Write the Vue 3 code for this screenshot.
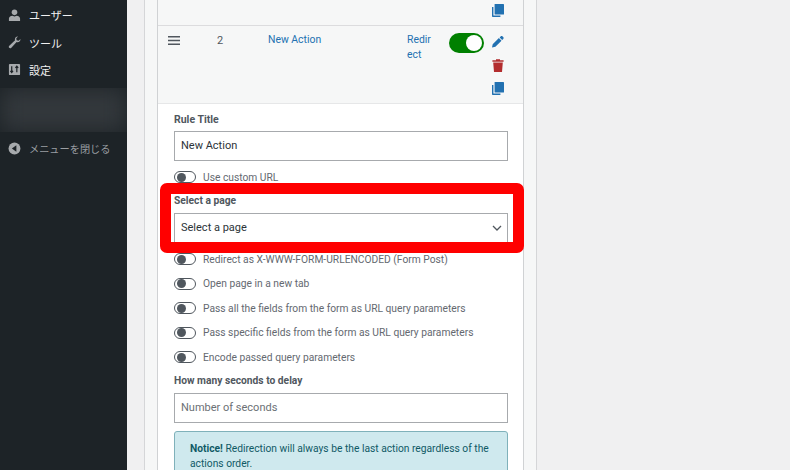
<script setup>
const menu = [
  { label: 'ユーザー', icon: 'user' },
  { label: 'ツール', icon: 'tool' },
  { label: '設定', icon: 'set' }
]
const afterSelect = [
  'Redirect as X-WWW-FORM-URLENCODED (Form Post)',
  'Open page in a new tab',
  'Pass all the fields from the form as URL query parameters',
  'Pass specific fields from the form as URL query parameters',
  'Encode passed query parameters'
]
</script>

<template>
  <div class="page">
    <aside class="side">
      <ul class="menu">
        <li v-for="m in menu" :key="m.label" class="menu-item">
          <svg class="mi" viewBox="0 0 14 14">
            <template v-if="m.icon === 'user'">
              <circle cx="7" cy="3.6" r="3" fill="#a7aaad" />
              <path d="M1 13V10.2C1 8.4 3 7.4 4.6 7.2L7 8.2L9.4 7.2C11 7.4 13 8.4 13 10.2V13Z" fill="#a7aaad" />
            </template>
            <path v-else-if="m.icon === 'tool'" d="M13.4 3.2C13.6 5 12.2 6.6 10.4 6.6C10 6.6 9.6 6.5 9.3 6.4L3.6 12.6C3 13.3 1.9 13.3 1.3 12.7C.7 12.1.7 11 1.4 10.4L7.6 4.7C7.4 4.4 7.4 4 7.4 3.6C7.4 1.8 9 .4 10.8.6L8.9 2.5L9.3 4.7L11.5 5.1Z" fill="#a7aaad" />
            <template v-else>
              <rect x="1" y="1" width="12" height="12" rx="1" fill="#a7aaad" />
              <path d="M4 3.5V10M2.6 8.4L4 10.2L5.4 8.4M9.5 3.5V10M8 5.2L9.5 3.5L11 5.2" fill="none" stroke="#1d2327" stroke-width="1.3" />
            </template>
          </svg>
          <span>{{ m.label }}</span>
        </li>
      </ul>
      <div class="blur-wrap"><div class="blurred"></div></div>
      <div class="collapse">
        <svg class="mi" viewBox="0 0 14 14">
          <circle cx="7" cy="7" r="6.4" fill="#a7aaad" />
          <path d="M9 3.6V10.4L4.2 7Z" fill="#1d2327" />
        </svg>
        <span>メニューを閉じる</span>
      </div>
    </aside>

    <main class="main">
      <section class="panel">
        <div class="card">
          <div class="row row-prev">
            <div class="acts">
              <svg class="act" viewBox="0 0 12 13">
                <path d="M0 3H1.4V11.6H8.4V13H1C.4 13 0 12.6 0 12Z" fill="#2271b1" />
                <rect x="2.6" y="0" width="9.4" height="10.6" rx=".6" fill="#2271b1" />
              </svg>
            </div>
          </div>
          <div class="row row-main">
            <svg class="drag" viewBox="0 0 12 9">
              <path d="M0 .8H12M0 4.5H12M0 8.2H12" stroke="#50575e" stroke-width="1.4" />
            </svg>
            <span class="num">2</span>
            <a class="title">New Action</a>
            <a class="type">Redir<br />ect</a>
            <span class="switch"><i></i></span>
            <div class="acts acts-col">
              <svg class="act" viewBox="0 0 12 12">
                <path d="M8.6.9C9.2.3 10 .3 10.6.9L11.2 1.5C11.8 2.1 11.8 2.9 11.2 3.5L10.2 4.5L7.6 1.9ZM6.9 2.6L9.5 5.2L3.4 11.3L0 12L.7 8.7Z" fill="#2271b1" />
              </svg>
              <svg class="act" viewBox="0 0 12 13">
                <path d="M4 1.2V.3H8V1.2H11.6V2.8H.4V1.2ZM1.2 3.6H10.8L10 13H2Z" fill="#b32d2e" />
              </svg>
              <svg class="act" viewBox="0 0 12 13">
                <path d="M0 3H1.4V11.6H8.4V13H1C.4 13 0 12.6 0 12Z" fill="#2271b1" />
                <rect x="2.6" y="0" width="9.4" height="10.6" rx=".6" fill="#2271b1" />
              </svg>
            </div>
          </div>

          <form class="form">
            <label class="lbl lbl-first">Rule Title</label>
            <div class="field">New Action</div>

            <div class="tog tog-custom"><span class="off"><i></i></span><span>Use custom URL</span></div>

            <label class="lbl lbl-select">Select a page</label>
            <div class="field field-select">
              <span>Select a page</span>
              <svg class="chev" viewBox="0 0 10 6"><path d="M1 1L5 5L9 1" fill="none" stroke="#50575e" stroke-width="1.3" /></svg>
            </div>

            <div class="togs">
              <div v-for="t in afterSelect" :key="t" class="tog"><span class="off"><i></i></span><span>{{ t }}</span></div>
            </div>

            <label class="lbl lbl-delay">How many seconds to delay</label>
            <div class="field placeholder">Number of seconds</div>

            <div class="notice"><b>Notice!</b> Redirection will always be the last action regardless of the actions order.</div>
          </form>
        </div>
      </section>
    </main>

    <div class="highlight"></div>
  </div>
</template>

<style>
html, body { margin: 0; overflow: hidden; }
</style>

<style scoped>
.page {
  position: relative;
  display: flex;
  width: 790px;
  height: 470px;
  overflow: hidden;
  background: #f0f0f1;
  font-family: Roboto, "Noto Sans CJK JP", sans-serif;
  font-size: 11px;
  color: #50575e;
}
.side {
  flex: none;
  width: 127px;
  background: #1d2327;
  color: #f0f0f1;
}
.menu {
  list-style: none;
  margin: 0;
  padding: 0;
}
.menu-item {
  display: flex;
  align-items: center;
  gap: 8px;
  height: 27.4px;
  padding-left: 8px;
  font-size: 11px;
  font-family: "Noto Sans CJK JP", sans-serif;
}
.menu-item:first-child { margin-top: 1.5px; }
.mi { flex: none; width: 13px; height: 13px; }
.blur-wrap {
  height: 44px;
  margin-top: 4px;
  overflow: hidden;
}
.blurred {
  height: 100%;
  background: #33383c;
  filter: blur(11px);
}
.collapse {
  display: flex;
  align-items: center;
  gap: 8px;
  height: 20px;
  margin-top: 7px;
  padding-left: 8px;
  color: #9a9ea2;
  font-size: 10.2px;
  font-family: "Noto Sans CJK JP", sans-serif;
}
.main {
  flex: none;
  width: 410px;
  padding-left: 17px;
}
.panel {
  width: 393px;
  height: 470px;
  box-sizing: border-box;
  border: 1px solid #d5d6d8;
  border-width: 0 1px;
  background: #f6f7f7;
  padding-left: 12px;
}
.card {
  width: 367px;
  height: 470px;
  box-sizing: border-box;
  background: #fff;
  border: 1px solid #d0d2d4;
  border-width: 0 1px;
}
.row {
  display: flex;
  background: #f6f7f7;
  box-sizing: border-box;
}
.row-prev {
  height: 26px;
  justify-content: flex-end;
  border-bottom: 1px solid #dcdcde;
  padding-top: 4px;
}
.row-main {
  position: relative;
  height: 78px;
  border-bottom: 1px solid #e6e7e8;
  padding-top: 6px;
  font-size: 10.4px;
  line-height: 15px;
}
.acts { width: 32px; flex: none; }
.act { display: block; width: 12px; height: 13px; }
.row-prev .acts { width: 31.5px; }
.drag { flex: none; width: 12px; height: 9px; margin: 4px 0 0 10px; }
.num { flex: none; width: 15px; margin: 0 0 0 37px; padding-top: 1px; color: #50575e; font-size: 11px; }
.title { flex: none; width: 139px; margin-left: 36px; color: #2271b1; }
.type { flex: none; width: 42px; color: #2271b1; }
.switch {
  flex: none;
  display: flex;
  align-items: center;
  justify-content: flex-end;
  width: 35px;
  height: 20px;
  margin-top: 1px;
  padding-right: 2px;
  box-sizing: border-box;
  border-radius: 10px;
  background: #008000;
}
.switch i {
  width: 16px;
  height: 16px;
  border-radius: 50%;
  background: #fff;
}
.acts-col {
  display: flex;
  flex-direction: column;
  gap: 10.5px;
  margin-left: 8px;
  width: 14px;
  padding-top: 3px;
}
.form {
  padding: 0 15px 0 16px;
}
.lbl {
  display: block;
  font-weight: 700;
  font-size: 10.25px;
  line-height: 14px;
  color: #50575e;
}
.lbl-first { margin-top: 9px; margin-bottom: 4px; font-size: 10.5px; }
.lbl-select { margin-top: 10px; margin-bottom: 5px; }
.lbl-delay { margin-top: 10px; margin-bottom: 5px; }
.field {
  display: flex;
  align-items: center;
  justify-content: space-between;
  height: 30px;
  box-sizing: border-box;
  padding: 0 6px 2px;
  border: 1px solid #a7aaad;
  background: #fff;
  font-size: 11px;
  color: #2c3338;
}
.field-select { height: 30px; }
.placeholder { color: #6b7075; }
.chev { width: 10px; height: 6px; margin: 2px -1px 0 0; }
.tog {
  display: flex;
  align-items: center;
  gap: 7px;
  height: 14px;
  font-size: 10.25px;
  color: #646970;
}
.tog-custom { margin-top: 9px; }
.togs {
  display: flex;
  flex-direction: column;
  gap: 10.5px;
  margin-top: 9px;
}
.off {
  flex: none;
  display: flex;
  align-items: center;
  width: 22px;
  height: 12px;
  padding-left: 2px;
  box-sizing: border-box;
  border: 1px solid #50575e;
  border-radius: 7px;
  background: #fff;
}
.off i {
  width: 9px;
  height: 9px;
  border-radius: 50%;
  background: #50575e;
}
.notice {
  margin-top: 8px;
  padding: 9px 15px;
  border: 1px solid #7fb1ba;
  border-radius: 3px;
  background: #cfe9ee;
  color: #0f5a66;
  font-size: 10.25px;
  line-height: 15px;
}
.highlight {
  position: absolute;
  left: 160px;
  top: 183px;
  width: 364px;
  height: 70px;
  box-sizing: border-box;
  border: 11px solid #ff0000;
  border-radius: 7px;
  pointer-events: none;
}
</style>
